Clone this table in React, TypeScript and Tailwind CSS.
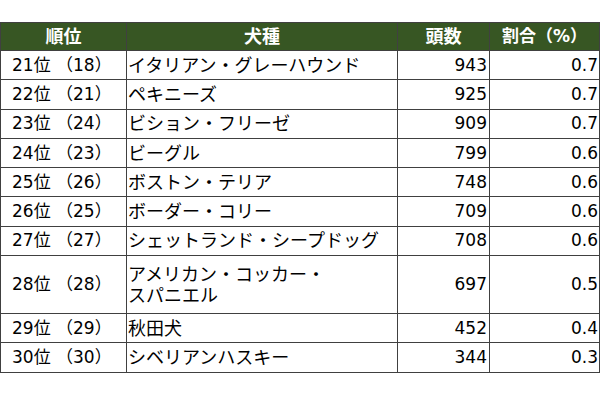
const rows = [
  { rank: "21位 （18）", breed: ["イタリアン・グレーハウンド"], count: "943", ratio: "0.7" },
  { rank: "22位 （21）", breed: ["ペキニーズ"], count: "925", ratio: "0.7" },
  { rank: "23位 （24）", breed: ["ビション・フリーゼ"], count: "909", ratio: "0.7" },
  { rank: "24位 （23）", breed: ["ビーグル"], count: "799", ratio: "0.6" },
  { rank: "25位 （26）", breed: ["ボストン・テリア"], count: "748", ratio: "0.6" },
  { rank: "26位 （25）", breed: ["ボーダー・コリー"], count: "709", ratio: "0.6" },
  { rank: "27位 （27）", breed: ["シェットランド・シープドッグ"], count: "708", ratio: "0.6" },
  { rank: "28位 （28）", breed: ["アメリカン・コッカー・", "スパニエル"], count: "697", ratio: "0.5" },
  { rank: "29位 （29）", breed: ["秋田犬"], count: "452", ratio: "0.4" },
  { rank: "30位 （30）", breed: ["シベリアンハスキー"], count: "344", ratio: "0.3" },
];

export default function App() {
  return (
    <div
      className="w-[600px] h-[400px] bg-white pt-[22px] text-black"
      style={{ fontFamily: '"DejaVu Sans", "Noto Sans CJK JP", sans-serif' }}
    >
      <table className="w-[599px] border-collapse table-fixed text-[17px] leading-[21px]">
        <colgroup>
          <col className="w-[126px]" />
          <col className="w-[271px]" />
          <col className="w-[92px]" />
          <col className="w-[110px]" />
        </colgroup>
        <thead>
          <tr className="bg-[#375623] text-white font-bold text-[18px]">
            <th className="h-[28px] border border-[#404040] text-center p-0">順位</th>
            <th className="h-[28px] border border-[#404040] text-center p-0">犬種</th>
            <th className="h-[28px] border border-[#404040] text-center p-0">頭数</th>
            <th className="h-[28px] border border-[#404040] text-center p-0 text-[17px]">割合（%）</th>
          </tr>
        </thead>
        <tbody>
          {rows.map((r) => (
            <tr key={r.rank}>
              <td
                className={`${r.breed.length > 1 ? "h-[58px]" : "h-[29.3px]"} border border-[#404040] pl-[11px] pr-0 py-0 whitespace-nowrap`}
              >
                {r.rank}
              </td>
              <td className="border border-[#404040] pl-[1px] pr-0 py-0 whitespace-nowrap text-[18px] leading-[21px]">
                {r.breed.map((b) => (
                  <div key={b}>{b}</div>
                ))}
              </td>
              <td className="border border-[#404040] pr-[2px] pl-0 py-0 text-right">{r.count}</td>
              <td className="border border-[#404040] pr-[1px] pl-0 py-0 text-right">{r.ratio}</td>
            </tr>
          ))}
        </tbody>
      </table>
    </div>
  );
}
